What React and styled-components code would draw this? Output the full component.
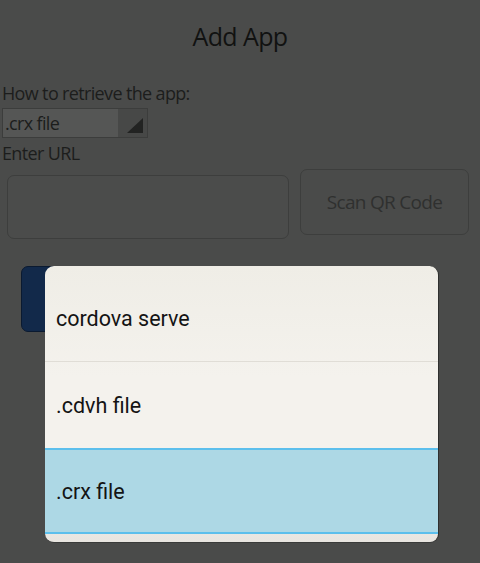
import React from "react";
import styled, { createGlobalStyle } from "styled-components";

const Global = createGlobalStyle`
  html, body { margin: 0; padding: 0; background: #4a4b4a; }
  body { width: 480px; height: 563px; overflow: hidden; font-family: "Open Sans", "Noto Sans", sans-serif; }
  #root { position: relative; width: 480px; height: 563px; }
`;

const Page = styled.div`
  display: flex;
  flex-direction: column;
  height: 563px;
  background: #4a4b4a;
  color: #151615;
`;

const Header = styled.header`
  height: 81px;
  display: flex;
  align-items: center;
  justify-content: center;
  font-size: 25px;
  letter-spacing: -0.6px;
  color: #111211;
  padding-bottom: 10px;
  box-sizing: border-box;
`;

const Label = styled.div`
  font-size: 18px;
  line-height: 24px;
  letter-spacing: -0.65px;
  color: #1c1d1c;
  padding-left: 2px;
  margin-top: ${p => p.$top || 0}px;
`;

const Select = styled.div`
  margin: 3px 0 0 2px;
  width: 146px;
  height: 30px;
  box-sizing: border-box;
  border: 1px solid #3c3d3c;
  display: flex;
  background: #555655;
`;

const SelectText = styled.div`
  flex: 1;
  font-size: 18px;
  line-height: 28px;
  letter-spacing: -0.65px;
  padding-left: 2px;
  color: #1c1d1c;
`;

const SelectArrow = styled.div`
  width: 29px;
  background: #474847;
  display: flex;
  align-items: flex-end;
  justify-content: flex-end;
  padding: 0 4px 4px 0;
  box-sizing: border-box;
`;

const UrlRow = styled.div`
  display: flex;
  align-items: flex-start;
  gap: 11px;
  padding: 4px 11px 0 7px;
`;

const UrlInput = styled.div`
  width: 282px;
  height: 64px;
  margin-top: 6px;
  box-sizing: border-box;
  border: 1.5px solid #3d3e3d;
  border-radius: 7px;
  background: #4b4c4b;
`;

const GhostButton = styled.div`
  width: 169px;
  height: 66px;
  box-sizing: border-box;
  border: 1.5px solid #3d3e3d;
  border-radius: 7px;
  display: flex;
  align-items: center;
  justify-content: center;
  font-size: 19px;
  letter-spacing: -0.7px;
  color: #2f302f;
`;

const ButtonRow = styled.div`
  display: flex;
  padding: 27px 0 0 21px;
`;

const ActionButton = styled.div`
  width: ${p => p.$w}px;
  height: 66px;
  box-sizing: border-box;
  border-radius: 7px;
  background: ${p => (p.$primary ? "#12294a" : "#4b4c4b")};
  border: 1px solid ${p => (p.$primary ? "#0b1a30" : "#525352")};
`;

const Dialog = styled.div`
  position: absolute;
  left: 45px;
  top: 266px;
  width: 394px;
  box-sizing: border-box;
  border-radius: 9px;
  padding: 10px 0 8px;
  background: linear-gradient(#efede6, #f4f2ed 40%, #f4f2ed 80%, #e8e5e0);
  border-right: 1px solid #2f302f;
  border-bottom: 1px solid #3a3b3a;
  overflow: hidden;
  font-family: Roboto, "Noto Sans", sans-serif;
`;

const Option = styled.div`
  height: 86px;
  box-sizing: border-box;
  display: flex;
  align-items: center;
  padding-left: 11px;
  font-size: 21.5px;
  color: #141414;
  background: ${p => (p.$selected ? "#add8e5" : "transparent")};
  border-top: ${p => (p.$selected ? "2px solid #5cbfec" : "none")};
  border-bottom: ${p =>
    p.$selected ? "2px solid #5cbfec" : p.$divider ? "1px solid #e0ddd6" : "none"};
`;

const options = [
  { label: "cordova serve", divider: true },
  { label: ".cdvh file" },
  { label: ".crx file", selected: true },
];

export default function App() {
  return (
    <>
      <Global />
      <Page>
        <Header>Add App</Header>
        <Label>How to retrieve the app:</Label>
        <Select>
          <SelectText>.crx file</SelectText>
          <SelectArrow>
            <svg width="16" height="15" viewBox="0 0 16 15">
              <polygon points="16,0 16,15 0,15" fill="#222322" />
            </svg>
          </SelectArrow>
        </Select>
        <Label $top={3}>Enter URL</Label>
        <UrlRow>
          <UrlInput />
          <GhostButton>Scan QR Code</GhostButton>
        </UrlRow>
        <ButtonRow>
          <ActionButton $primary $w={84} />
          <ActionButton $w={100} />
        </ButtonRow>
      </Page>
      <Dialog>
        {options.map(o => (
          <Option key={o.label} $selected={o.selected} $divider={o.divider}>
            {o.label}
          </Option>
        ))}
      </Dialog>
    </>
  );
}
